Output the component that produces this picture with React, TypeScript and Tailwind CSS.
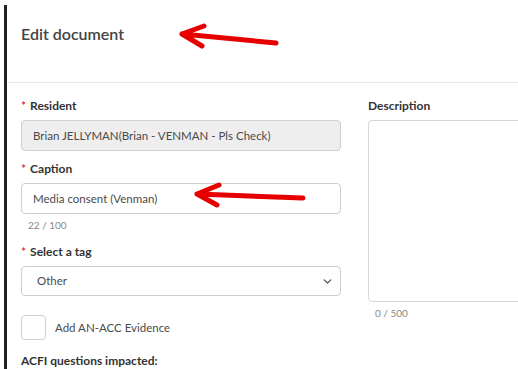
import { ChevronDown } from "lucide-react";

function Arrow({ className, d }: { className?: string; d: string }) {
  return (
    <svg className={className} width="120" height="30" viewBox="0 0 120 30" fill="none">
      <path d={d} stroke="#e60000" strokeWidth="5" strokeLinecap="round" strokeLinejoin="round" />
    </svg>
  );
}

function Label({ text, required }: { text: string; required?: boolean }) {
  return (
    <p className="text-[12px] font-bold text-[#333] leading-4 mb-[6px]">
      {required && <span className="text-[#e0393e] mr-1">*</span>}
      {text}
    </p>
  );
}

export default function App() {
  return (
    <div
      className="relative w-[518px] h-[369px] overflow-hidden bg-white"
      style={{ fontFamily: '"Source Sans Pro", Lato, "Noto Sans", sans-serif' }}
    >
      <div className="flex h-full pt-[5px] pl-[4px]">
        <div className="w-[3px] shrink-0 h-full bg-[#222]" />
        <div className="flex-1 min-w-0 flex flex-col">
          <div className="h-[78px] shrink-0 border-b border-[#e6e6e6] ml-[1px] pl-[13px] pt-[17px]">
            <h2 className="text-[16px] font-semibold text-[#444]">Edit document</h2>
          </div>
          <div className="flex gap-[27px] pl-[14px] pt-[15px] w-[720px] shrink-0">
            <div className="w-[320px] shrink-0">
              <Label text="Resident" required />
              <div className="h-[31px] rounded border border-[#cfcfcf] bg-[#eeeeee] px-[11px] flex items-center text-[11.5px] text-[#4a4a4a]">
                Brian JELLYMAN(Brian - VENMAN - Pls Check)
              </div>
              <div className="mt-[10px]">
                <Label text="Caption" required />
                <div className="h-[31px] rounded border border-[#cfcfcf] bg-white px-[11px] flex items-center text-[11.5px] text-[#4a4a4a]">
                  Media consent (Venman)
                </div>
                <p className="text-[10px] text-[#888] mt-[4px] pl-[7px]">22 / 100</p>
              </div>
              <div className="mt-[11px]">
                <Label text="Select a tag" required />
                <div className="h-[30px] rounded border border-[#cfcfcf] bg-white pl-[15px] pr-[6px] flex items-center justify-between text-[11.5px] text-[#4a4a4a]">
                  <span>Other</span>
                  <ChevronDown size={13} strokeWidth={2.5} className="text-[#555]" />
                </div>
              </div>
              <div className="mt-[19px] flex items-center gap-[9px]">
                <div className="w-[25px] h-[25px] rounded border border-[#cfcfcf] bg-white" />
                <span className="text-[11.5px] text-[#4a4a4a]">Add AN-ACC Evidence</span>
              </div>
              <p className="mt-[13px] text-[12px] leading-4 font-bold text-[#333]">ACFI questions impacted:</p>
            </div>
            <div className="w-[320px] shrink-0">
              <Label text="Description" />
              <div className="h-[182px] rounded border border-[#d6d6d6] bg-white" />
              <p className="text-[10px] text-[#888] mt-[4px] pl-[7px]">0 / 500</p>
            </div>
          </div>
        </div>
      </div>
      <Arrow className="absolute left-[177px] top-[22px]" d="M99 21 L5 12 M5 12 L27 4 M5 12 L25 24" />
      <Arrow className="absolute left-[192px] top-[182px]" d="M111 16 L5 12 M5 12 L27 3 M5 12 L25 23" />
    </div>
  );
}
